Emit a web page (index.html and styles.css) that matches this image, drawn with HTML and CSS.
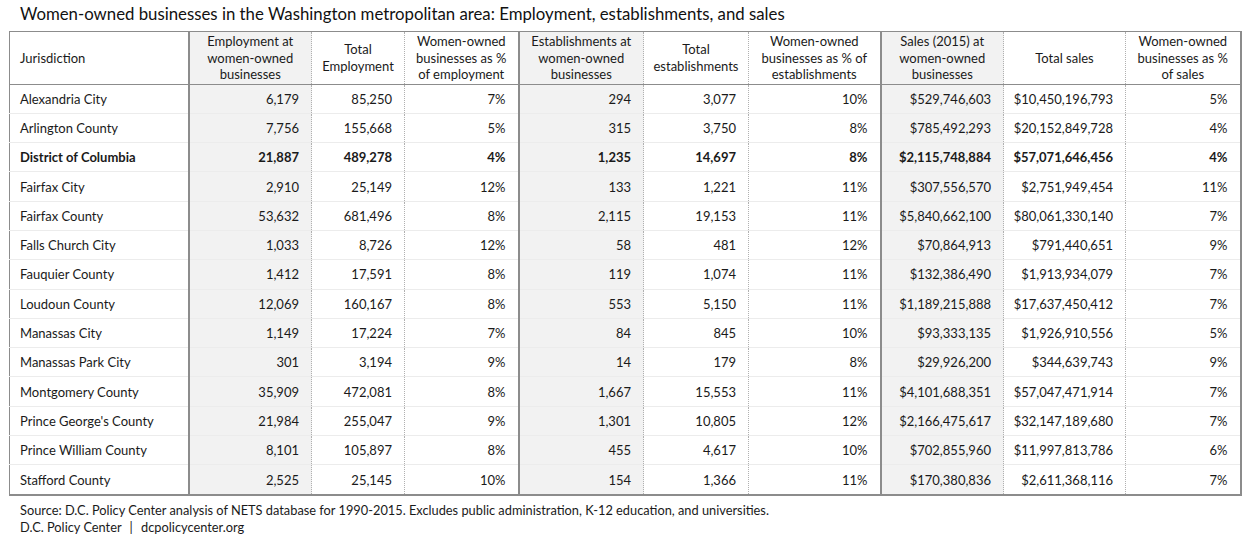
FILE: index.html
```html
<!DOCTYPE html>
<html>
<head>
<meta charset="utf-8">
<link rel="stylesheet" href="styles.css">
</head>
<body>
<div class="page">
  <h1 class="title">Women-owned businesses in the Washington metropolitan area: Employment, establishments, and sales</h1>
  <table class="data">
    <colgroup>
      <col class="c1"><col class="c2"><col class="c3"><col class="c4"><col class="c5"><col class="c6"><col class="c7"><col class="c8"><col class="c9"><col class="c10">
    </colgroup>
    <thead>
      <tr>
        <th class="name">Jurisdiction</th>
        <th class="shade solid">Employment at women-owned businesses</th>
        <th class="dot">Total Employment</th>
        <th class="dot">Women-owned businesses as % of employment</th>
        <th class="shade solid">Establishments at women-owned businesses</th>
        <th class="dot">Total establishments</th>
        <th class="dot">Women-owned businesses as % of establishments</th>
        <th class="shade solid">Sales (2015) at women-owned businesses</th>
        <th class="dot">Total sales</th>
        <th class="dot">Women-owned businesses as % of sales</th>
      </tr>
    </thead>
    <tbody>
      <tr><td class="name">Alexandria City</td><td class="shade solid">6,179</td><td class="dot">85,250</td><td class="dot">7%</td><td class="shade solid">294</td><td class="dot">3,077</td><td class="dot">10%</td><td class="shade solid">$529,746,603</td><td class="dot">$10,450,196,793</td><td class="dot">5%</td></tr>
      <tr><td class="name">Arlington County</td><td class="shade solid">7,756</td><td class="dot">155,668</td><td class="dot">5%</td><td class="shade solid">315</td><td class="dot">3,750</td><td class="dot">8%</td><td class="shade solid">$785,492,293</td><td class="dot">$20,152,849,728</td><td class="dot">4%</td></tr>
      <tr class="bold"><td class="name">District of Columbia</td><td class="shade solid">21,887</td><td class="dot">489,278</td><td class="dot">4%</td><td class="shade solid">1,235</td><td class="dot">14,697</td><td class="dot">8%</td><td class="shade solid">$2,115,748,884</td><td class="dot">$57,071,646,456</td><td class="dot">4%</td></tr>
      <tr><td class="name">Fairfax City</td><td class="shade solid">2,910</td><td class="dot">25,149</td><td class="dot">12%</td><td class="shade solid">133</td><td class="dot">1,221</td><td class="dot">11%</td><td class="shade solid">$307,556,570</td><td class="dot">$2,751,949,454</td><td class="dot">11%</td></tr>
      <tr><td class="name">Fairfax County</td><td class="shade solid">53,632</td><td class="dot">681,496</td><td class="dot">8%</td><td class="shade solid">2,115</td><td class="dot">19,153</td><td class="dot">11%</td><td class="shade solid">$5,840,662,100</td><td class="dot">$80,061,330,140</td><td class="dot">7%</td></tr>
      <tr><td class="name">Falls Church City</td><td class="shade solid">1,033</td><td class="dot">8,726</td><td class="dot">12%</td><td class="shade solid">58</td><td class="dot">481</td><td class="dot">12%</td><td class="shade solid">$70,864,913</td><td class="dot">$791,440,651</td><td class="dot">9%</td></tr>
      <tr><td class="name">Fauquier County</td><td class="shade solid">1,412</td><td class="dot">17,591</td><td class="dot">8%</td><td class="shade solid">119</td><td class="dot">1,074</td><td class="dot">11%</td><td class="shade solid">$132,386,490</td><td class="dot">$1,913,934,079</td><td class="dot">7%</td></tr>
      <tr><td class="name">Loudoun County</td><td class="shade solid">12,069</td><td class="dot">160,167</td><td class="dot">8%</td><td class="shade solid">553</td><td class="dot">5,150</td><td class="dot">11%</td><td class="shade solid">$1,189,215,888</td><td class="dot">$17,637,450,412</td><td class="dot">7%</td></tr>
      <tr><td class="name">Manassas City</td><td class="shade solid">1,149</td><td class="dot">17,224</td><td class="dot">7%</td><td class="shade solid">84</td><td class="dot">845</td><td class="dot">10%</td><td class="shade solid">$93,333,135</td><td class="dot">$1,926,910,556</td><td class="dot">5%</td></tr>
      <tr><td class="name">Manassas Park City</td><td class="shade solid">301</td><td class="dot">3,194</td><td class="dot">9%</td><td class="shade solid">14</td><td class="dot">179</td><td class="dot">8%</td><td class="shade solid">$29,926,200</td><td class="dot">$344,639,743</td><td class="dot">9%</td></tr>
      <tr><td class="name">Montgomery County</td><td class="shade solid">35,909</td><td class="dot">472,081</td><td class="dot">8%</td><td class="shade solid">1,667</td><td class="dot">15,553</td><td class="dot">11%</td><td class="shade solid">$4,101,688,351</td><td class="dot">$57,047,471,914</td><td class="dot">7%</td></tr>
      <tr><td class="name">Prince George's County</td><td class="shade solid">21,984</td><td class="dot">255,047</td><td class="dot">9%</td><td class="shade solid">1,301</td><td class="dot">10,805</td><td class="dot">12%</td><td class="shade solid">$2,166,475,617</td><td class="dot">$32,147,189,680</td><td class="dot">7%</td></tr>
      <tr><td class="name">Prince William County</td><td class="shade solid">8,101</td><td class="dot">105,897</td><td class="dot">8%</td><td class="shade solid">455</td><td class="dot">4,617</td><td class="dot">10%</td><td class="shade solid">$702,855,960</td><td class="dot">$11,997,813,786</td><td class="dot">6%</td></tr>
      <tr><td class="name">Stafford County</td><td class="shade solid">2,525</td><td class="dot">25,145</td><td class="dot">10%</td><td class="shade solid">154</td><td class="dot">1,366</td><td class="dot">11%</td><td class="shade solid">$170,380,836</td><td class="dot">$2,611,368,116</td><td class="dot">7%</td></tr>
    </tbody>
  </table>
  <div class="notes">
    <p>Source: D.C. Policy Center analysis of NETS database for 1990-2015. Excludes public administration, K-12 education, and universities.</p>
    <p>D.C. Policy Center <span class="sep">|</span> dcpolicycenter.org</p>
  </div>
</div>
</body>
</html>
```
FILE: styles.css
```css
html, body {
  margin: 0;
  padding: 0;
  background: #ffffff;
}
body {
  font-family: "Lato", "Liberation Sans", sans-serif;
  color: #1a1a1a;
}
.page {
  padding: 4px 0 0 9px;
}
.title {
  margin: 0 0 7px 11px;
  font-size: 16.8px;
  font-weight: normal;
  line-height: 20px;
  color: #111;
}
.data {
  border-collapse: collapse;
  width: 1231px;
  table-layout: fixed;
  font-size: 13px;
  border: 1px solid #8c8c8c;
  border-right-width: 2px;
  border-bottom-width: 2px;
}
.c1 { width: 179px; }
.c2 { width: 123px; }
.c3 { width: 93px; }
.c4 { width: 114px; }
.c5 { width: 125px; }
.c6 { width: 105px; }
.c7 { width: 132px; }
.c8 { width: 123px; }
.c9 { width: 122px; }
.c10 { width: 115px; }
th {
  font-weight: normal;
  text-align: center;
  line-height: 16.5px;
  padding: 1px 8px 1px;
  height: 49px;
  border-bottom: 1px solid #8c8c8c;
}
th.name {
  text-align: left;
}
td {
  height: 28.3px;
  padding: 0 12px 0 8px;
  text-align: right;
  border-top: 1px solid #ececec;
  white-space: nowrap;
}
tbody tr:first-child td {
  border-top: none;
}
.name {
  text-align: left;
  padding-left: 10px;
}
.shade {
  background: #f2f2f2;
}
.solid {
  border-left: 2px solid #8c8c8c;
}
.dot {
  border-left: 1px dotted #b0b0b0;
}
.bold td {
  font-weight: bold;
}
.notes {
  margin-top: 6px;
  padding-left: 9px;
  font-size: 12.8px;
  line-height: 17px;
}
.notes p {
  margin: 0 0 0 2px;
}
.sep {
  margin: 0 5px;
}
```
